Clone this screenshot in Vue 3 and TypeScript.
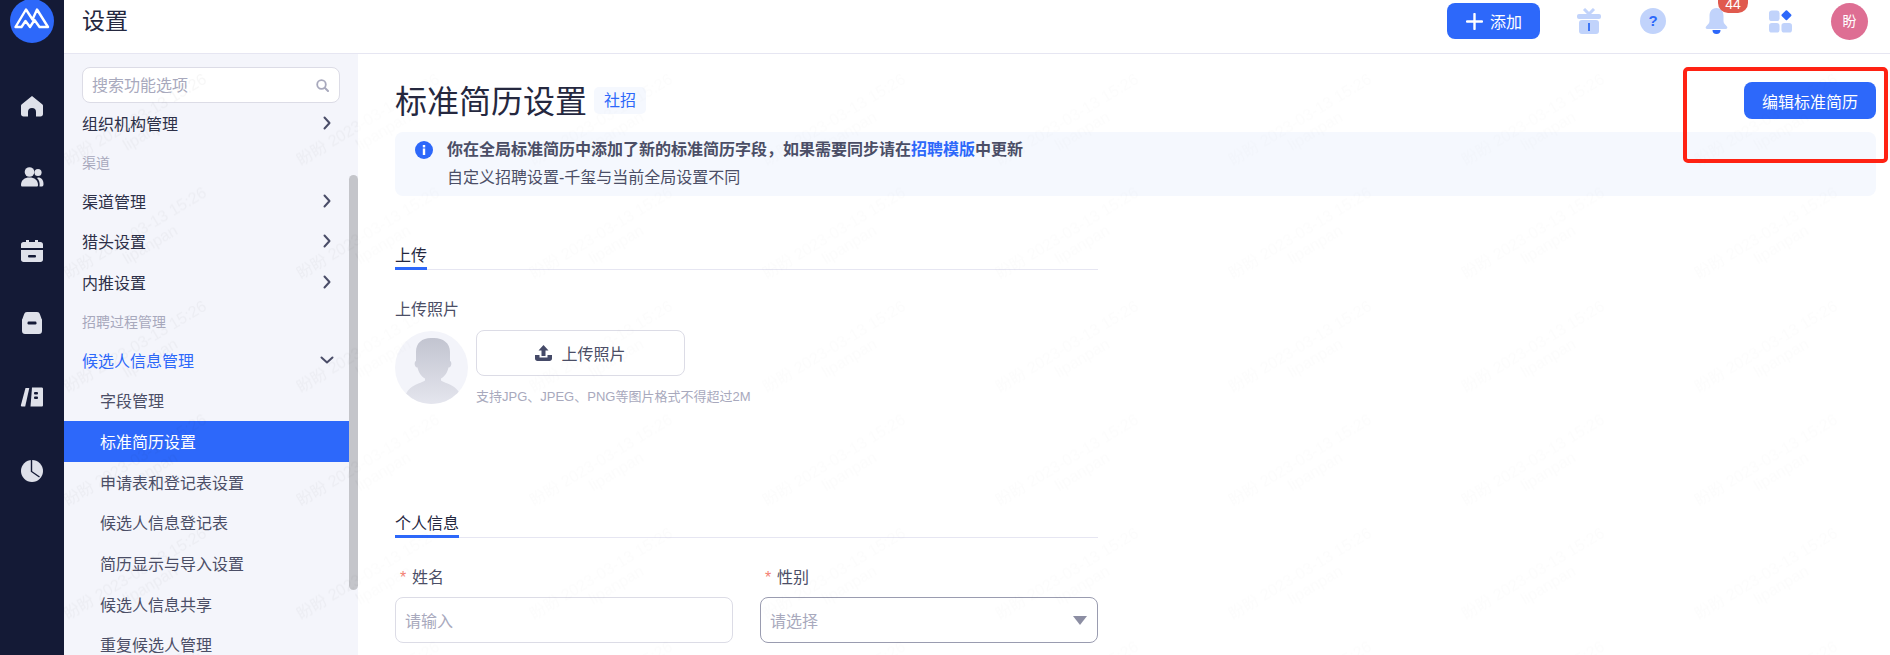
<script setup lang="ts">
// Settings page: standard resume configuration
interface MenuEntry {
  label: string;
  kind: 'group' | 'section' | 'item';
  open?: boolean;
  active?: boolean;
}

const menu: MenuEntry[] = [
  { label: '组织机构管理', kind: 'group' },
  { label: '渠道', kind: 'section' },
  { label: '渠道管理', kind: 'group' },
  { label: '猎头设置', kind: 'group' },
  { label: '内推设置', kind: 'group' },
  { label: '招聘过程管理', kind: 'section' },
  { label: '候选人信息管理', kind: 'group', open: true },
  { label: '字段管理', kind: 'item' },
  { label: '标准简历设置', kind: 'item', active: true },
  { label: '申请表和登记表设置', kind: 'item' },
  { label: '候选人信息登记表', kind: 'item' },
  { label: '简历显示与导入设置', kind: 'item' },
  { label: '候选人信息共享', kind: 'item' },
  { label: '重复候选人管理', kind: 'item' },
];
</script>

<template>
  <div class="page">
    <nav class="rail">
      <svg class="logo" width="44" height="44" viewBox="0 0 44 44">
        <circle cx="22" cy="22" r="22" fill="#2d68fa" />
        <path
          d="M5.500 28 16 10.500l6.500 10L27 10.500 38 28h-8.500l-5-7-4.500 7-4.500-6-4 6z"
          fill="none"
          stroke="#fff"
          stroke-width="2.400"
          stroke-linejoin="round"
        />
      </svg>

      <svg class="rail-icon" style="margin-top: 51px" width="24" height="24" viewBox="0 0 24 24">
        <path
          d="M12 2 22.500 10.500c.5.400.5 1 .5 1.500v8c0 1.500-1 2.500-2.500 2.500H16v-4.500a4 4 0 0 0-8 0V22.500H3.500C2 22.500 1 21.500 1 20v-8c0-.5 0-1.100.5-1.500z"
          fill="#dfe1ea"
        />
      </svg>
      <svg class="rail-icon" style="margin-top: 47px" width="24" height="24" viewBox="0 0 24 24">
        <circle cx="9.500" cy="7" r="4.800" fill="#dfe1ea" />
        <circle cx="18" cy="7.500" r="3.600" fill="#dfe1ea" />
        <path d="M1 20c0-5 3.500-7.500 8.500-7.500S18 15 18 20c0 1-.5 1.500-1.500 1.500h-14C1.500 21.500 1 21 1 20z" fill="#dfe1ea" />
        <path d="M18 12.500c3.500 0 5.500 2.500 5.500 6.500 0 1.500-.5 2.500-1.500 2.500h-2.500c.5-3.500-.2-6.500-2.500-8.500z" fill="#dfe1ea" />
      </svg>
      <svg class="rail-icon" style="margin-top: 50px" width="24" height="24" viewBox="0 0 24 24">
        <path d="M1 9V5.500C1 4 2 3 3.500 3H6V1h3v2h6V1h3v2h2.500C22 3 23 4 23 5.500V9z" fill="#dfe1ea" />
        <path d="M1 11h22v9.500c0 1.500-1 2.500-2.500 2.500h-17C2 23 1 22 1 20.500z" fill="#dfe1ea" />
        <rect x="8" y="16" width="8" height="2.400" rx="1" fill="#141a36" />
      </svg>
      <svg class="rail-icon" style="margin-top: 48px" width="24" height="24" viewBox="0 0 24 24">
        <path d="M7 1h10c1.500 0 2.500.8 3 2.500L22 9H2l2-5.500C4.500 1.800 5.500 1 7 1z" fill="#dfe1ea" />
        <path d="M2 8.500h20V20c0 1.800-1.200 3-3 3H5c-1.800 0-3-1.200-3-3z" fill="#dfe1ea" />
        <rect x="7.500" y="10.500" width="9" height="3" rx="1.200" fill="#141a36" />
      </svg>
      <svg class="rail-icon" style="margin-top: 50px" width="24" height="24" viewBox="0 0 24 24">
        <path d="M5.500 3h3.800L5.200 21.500H1.500L.8 20.500z" fill="#dfe1ea" />
        <path d="M12 2.500h9.500c1 0 1.500.5 1.500 1.500v16c0 1-.5 1.500-1.500 1.500H10.500z" fill="#dfe1ea" />
        <rect x="14" y="7" width="4" height="2.600" rx="1" fill="#141a36" />
        <rect x="14" y="11.500" width="4" height="2.600" rx="1" fill="#141a36" />
      </svg>
      <svg class="rail-icon" style="margin-top: 50px" width="24" height="24" viewBox="0 0 24 24">
        <circle cx="12" cy="12" r="11" fill="#dfe1ea" />
        <path d="M11.500 1v11.500l8 5.500" fill="none" stroke="#141a36" stroke-width="1.400" />
      </svg>
    </nav>

    <div class="body">
      <header class="topbar">
        <h1 class="crumb">设置</h1>
        <div class="tools">
          <button class="add-btn">
            <svg width="17" height="17" viewBox="0 0 17 17">
              <path d="M8.500 1v15M1 8.500h15" stroke="#fff" stroke-width="2.400" stroke-linecap="round" />
            </svg>
            添加
          </button>
          <svg class="tool" width="24" height="26" viewBox="0 0 24 26">
            <path d="M12 6 7 1M12 6l5-5" stroke="#c1d3fb" stroke-width="3" fill="none" />
            <rect y="6" width="24" height="5" rx="2" fill="#c1d3fb" />
            <rect x="2" y="12" width="20" height="14" rx="3" fill="#c1d3fb" />
            <rect x="11" y="15" width="2" height="8" fill="#3b74f6" />
          </svg>
          <span class="help">?</span>
          <span class="bell">
            <svg width="25" height="26" viewBox="0 0 25 26">
              <path
                d="M11.500 0C6.500 0 4.500 4 4.500 8v5c0 2-1.500 3.500-3 5-1.500 1.500-1 3 1 3h18c2 0 2.500-1.500 1-3-1.500-1.500-3-3-3-5V8c0-4-2-8-7-8z"
                fill="#c1d3fb"
              />
              <path d="M7.500 22h8a4 4 0 0 1-8 0z" fill="#2d68fa" />
            </svg>
            <em class="badge">44</em>
          </span>
          <svg class="tool" width="23" height="24" viewBox="0 0 24 24">
            <rect x="0" y="1" width="11" height="11" rx="3" fill="#c1d3fb" />
            <rect x="0" y="14" width="11" height="10" rx="3" fill="#c1d3fb" />
            <rect x="13" y="14" width="11" height="10" rx="3" fill="#c1d3fb" />
            <rect x="14.200" y="2" width="8" height="8" rx="1" fill="#2d68fa" transform="rotate(45 18.200 6)" />
          </svg>
          <span class="user">盼</span>
        </div>
      </header>

      <div class="columns">
        <aside class="side">
          <div class="side-col">
            <label class="search">
              <input placeholder="搜索功能选项" />
              <svg width="13" height="13" viewBox="0 0 13 13">
                <circle cx="5.500" cy="5.500" r="4.300" fill="none" stroke="#a8a9bd" stroke-width="1.800" />
                <path d="m9 9 3 3" stroke="#a8a9bd" stroke-width="2" stroke-linecap="round" />
              </svg>
            </label>
            <ul class="menu">
              <li
                v-for="entry in menu"
                :key="entry.label"
                :class="[entry.kind, { open: entry.open, active: entry.active }]"
              >
                <span>{{ entry.label }}</span>
                <svg v-if="entry.kind === 'group' && !entry.open" width="8" height="14" viewBox="0 0 8 14">
                  <path d="m1.500 1.500 5 5.500-5 5.500" fill="none" stroke="#4a4d68" stroke-width="2" stroke-linecap="round" stroke-linejoin="round" />
                </svg>
                <svg v-else-if="entry.open" width="14" height="8" viewBox="0 0 14 8">
                  <path d="m1.500 1.500 5.500 5 5.500-5" fill="none" stroke="#4a4d68" stroke-width="2" stroke-linecap="round" stroke-linejoin="round" />
                </svg>
              </li>
            </ul>
          </div>
          <div class="track"><div class="thumb"></div></div>
        </aside>

        <main class="main">
          <div class="title-row">
            <div class="title">
              <h2>标准简历设置</h2>
              <span class="tag">社招</span>
            </div>
            <button class="edit-btn">编辑标准简历</button>
          </div>

          <div class="notice">
            <svg width="18" height="18" viewBox="0 0 18 18">
              <circle cx="9" cy="9" r="9" fill="#2d68fa" />
              <rect x="7.800" y="7.500" width="2.400" height="6.500" fill="#fff" />
              <rect x="7.800" y="4" width="2.400" height="2.400" fill="#fff" />
            </svg>
            <div>
              <p class="strong">你在全局标准简历中添加了新的标准简历字段，如果需要同步请在<a>招聘模版</a>中更新</p>
              <p>自定义招聘设置-千玺与当前全局设置不同</p>
            </div>
          </div>

          <section class="form-part upload-part">
            <div class="heading"><span>上传</span></div>
            <div class="field-label">上传照片</div>
            <div class="upload-row">
              <svg class="portrait" width="73" height="73" viewBox="0 0 73 73">
                <defs>
                  <linearGradient id="fig" x1="0" y1="0" x2="0" y2="1">
                    <stop offset="0" stop-color="#c2c4d0" />
                    <stop offset="1" stop-color="#e6e7ef" />
                  </linearGradient>
                  <clipPath id="disc"><circle cx="36.500" cy="36.500" r="36.500" /></clipPath>
                </defs>
                <circle cx="36.500" cy="36.500" r="36.500" fill="#f3f4fa" />
                <path
                  clip-path="url(#disc)"
                  d="M36 7c-9 0-15 5-15 14v9c-2 .5-2 6 1.500 6.500 1 5 4 9 7.500 11v2c-3 3-20 4-20 20v6h56v-6c0-16-17-17-20-20v-2c3.500-2 6.500-6 7.500-11 3.500-.5 3.500-6 1.500-6.500v-9c0-9-7-14-16-14z"
                  fill="url(#fig)"
                />
              </svg>
              <div>
                <button class="upload-btn">
                  <svg width="17" height="16" viewBox="0 0 17 16">
                    <path d="M8.500 0 13.500 5.500H10.500V11h-4V5.500H3.500z" fill="#454a68" />
                    <path d="M0 10h4.500v2.500h8V10H17v3.500c0 1.500-1 2.500-2.500 2.500h-12C1 16 0 15 0 13.500z" fill="#454a68" />
                  </svg>
                  上传照片
                </button>
                <p class="hint">支持JPG、JPEG、PNG等图片格式不得超过2M</p>
              </div>
            </div>
          </section>

          <section class="form-part person-part">
            <div class="heading"><span>个人信息</span></div>
            <div class="form-grid">
              <div>
                <div class="field-label"><i>*</i>姓名</div>
                <div class="control">请输入</div>
              </div>
              <div>
                <div class="field-label"><i>*</i>性别</div>
                <div class="control focus">
                  请选择
                  <svg width="14" height="9" viewBox="0 0 14 9"><path d="M0 0h14L7 9z" fill="#8c8ea3" /></svg>
                </div>
              </div>
            </div>
          </section>
        </main>
      </div>
    </div>

    <!-- annotation frame drawn on the screenshot -->
    <div class="red-frame"></div>

    <svg class="watermark" width="1890" height="655">
      <defs>
        <pattern id="wm" patternUnits="userSpaceOnUse" x="63" y="66" width="233" height="113.500">
          <g fill="#000" fill-opacity="0.03" font-size="16" font-family="'Liberation Sans','Noto Sans CJK SC',sans-serif">
            <text transform="translate(5 100) rotate(-31)">盼盼 2023-03-13 15:26</text>
            <text transform="translate(64 85) rotate(-31)">lipanpan</text>
          </g>
        </pattern>
      </defs>
      <rect x="64" y="54" width="294" height="601" fill="url(#wm)" />
      <rect x="358" y="54" width="1532" height="601" fill="url(#wm)" opacity="0.35" />
    </svg>
  </div>
</template>

<style>
html,
body {
  margin: 0;
  background: #fff;
}
</style>

<style scoped>
.page {
  position: relative;
  display: flex;
  width: 1890px;
  height: 655px;
  overflow: hidden;
  font-family: 'Liberation Sans', 'Noto Sans CJK SC', sans-serif;
  font-size: 16px;
  color: #2d3048;
  background: #fff;
}
h1,
h2,
p,
ul {
  margin: 0;
  padding: 0;
  font-weight: 400;
}
button {
  font: inherit;
  border: 0;
  cursor: pointer;
}

/* left rail */
.rail {
  flex: 0 0 64px;
  display: flex;
  flex-direction: column;
  align-items: center;
  background: #141a36;
}
.logo {
  flex: none;
  margin-top: -1px;
}
.rail-icon {
  flex: none;
  display: block;
}

.body {
  flex: 1;
  min-width: 0;
  display: flex;
  flex-direction: column;
}

/* top bar */
.topbar {
  flex: 0 0 54px;
  box-sizing: border-box;
  display: flex;
  justify-content: space-between;
  padding: 3px 22px 0 18px;
  border-bottom: 1px solid #e6e6f2;
}
.crumb {
  font-size: 23px;
  line-height: 36px;
  color: #25283f;
}
.tools {
  display: flex;
  align-items: center;
  gap: 39px;
  height: 36px;
}
.add-btn {
  display: flex;
  align-items: center;
  gap: 7px;
  box-sizing: border-box;
  width: 93px;
  height: 36px;
  margin-right: -2px;
  padding-left: 19px;
  border-radius: 8px;
  background: #2d68fa;
  color: #fff;
}
.tool {
  display: block;
  flex: none;
}
.help {
  flex: none;
  width: 26px;
  height: 26px;
  border-radius: 50%;
  background: #c1d3fb;
  color: #2d68fa;
  font-size: 15px;
  font-weight: 700;
  line-height: 26px;
  text-align: center;
}
.bell {
  position: relative;
  flex: none;
  width: 25px;
  height: 26px;
}
.badge {
  position: absolute;
  left: 13px;
  top: -14px;
  width: 30px;
  height: 19px;
  border-radius: 0 0 10px 10px;
  background: #e05a4e;
  color: #fff;
  font-size: 14px;
  font-style: normal;
  line-height: 21px;
  text-align: center;
}
.user {
  flex: none;
  width: 37px;
  height: 37px;
  border-radius: 50%;
  background: #de6e93;
  color: #fff;
  font-size: 14px;
  line-height: 37px;
  text-align: center;
}

.columns {
  flex: 1;
  min-height: 0;
  display: flex;
}

/* settings menu */
.side {
  flex: 0 0 294px;
  display: flex;
  background: #f4f5fb;
}
.side-col {
  flex: 1;
  min-width: 0;
}
.search {
  display: flex;
  align-items: center;
  box-sizing: border-box;
  width: 258px;
  height: 36px;
  margin: 13px 0 0 18px;
  padding: 0 10px 0 9px;
  border: 1px solid #dcdce6;
  border-radius: 8px;
  background: #fff;
}
.search input {
  flex: 1;
  min-width: 0;
  padding: 2px 0 0;
  border: 0;
  outline: 0;
  background: none;
  font: inherit;
}
.search input::placeholder {
  color: #a8a9bd;
}
.menu {
  list-style: none;
}
.menu li {
  display: flex;
  align-items: center;
  justify-content: space-between;
  box-sizing: border-box;
  height: 40.7px;
  padding: 0 18px 1px;
}
.menu .section {
  height: 37px;
  font-size: 14px;
  color: #a8a9bd;
}
.menu .open {
  color: #2d68fa;
}
.menu .open svg {
  margin-right: -3px;
}
.menu .item {
  padding-left: 36px;
  color: #4b4e66;
}
.menu .active {
  background: #2d68fa;
  color: #fff;
}
.track {
  flex: 0 0 9px;
}
.thumb {
  width: 9px;
  height: 415px;
  margin-top: 121px;
  border-radius: 5px;
  background: #c4c5ca;
}

/* content */
.main {
  flex: 1;
  min-width: 0;
  padding: 28px 14px 0 37px;
}
.title-row {
  display: flex;
  justify-content: space-between;
  align-items: flex-start;
  height: 40px;
  margin-bottom: 10px;
}
.title {
  display: flex;
  align-items: center;
  gap: 7px;
}
.title h2 {
  font-size: 32px;
  line-height: 40px;
  color: #25283f;
}
.tag {
  box-sizing: border-box;
  width: 52px;
  height: 27px;
  margin-top: -4px;
  border-radius: 5px;
  background: #f5f8fe;
  color: #2d68fa;
  line-height: 27px;
  text-align: center;
}
.edit-btn {
  width: 132px;
  height: 37px;
  border-radius: 8px;
  background: #2d68fa;
  color: #fff;
}
.notice {
  display: flex;
  gap: 14px;
  box-sizing: border-box;
  height: 64px;
  padding: 4px 20px;
  border-radius: 8px;
  background: #f5f8fe;
  color: #4b4e66;
  line-height: 28px;
}
.notice > svg {
  flex: none;
  margin-top: 5px;
}
.notice .strong {
  font-weight: 700;
}
.notice a {
  color: #2d68fa;
}

.form-part {
  width: 703px;
}
.upload-part {
  margin-top: 48px;
}
.person-part {
  margin-top: 105px;
}
.heading {
  border-bottom: 1px solid #e6e6f2;
  line-height: 23px;
  color: #25283f;
}
.heading span {
  display: inline-block;
  margin-bottom: -1px;
  border-bottom: 3px solid #2d68fa;
  vertical-align: bottom;
}
.field-label {
  height: 24px;
  margin-top: 28px;
  line-height: 24px;
  color: #4b4e66;
}
.field-label i {
  display: inline-block;
  width: 17px;
  padding-left: 5px;
  box-sizing: border-box;
  color: #f47f73;
  font-style: normal;
}
.upload-row {
  display: flex;
  gap: 8px;
  margin-top: 8px;
}
.portrait {
  flex: none;
  margin-top: 1px;
}
.upload-btn {
  display: flex;
  align-items: center;
  justify-content: center;
  gap: 9px;
  box-sizing: border-box;
  width: 209px;
  height: 46px;
  border: 1px solid #dcdce6;
  border-radius: 8px;
  background: #fff;
  color: #4b4e66;
}
.hint {
  margin-top: 11px;
  font-size: 13px;
  line-height: 20px;
  color: #a8a9bd;
}
.form-grid {
  display: grid;
  grid-template-columns: 338px 338px;
  gap: 27px;
}
.control {
  display: flex;
  align-items: center;
  justify-content: space-between;
  box-sizing: border-box;
  height: 46px;
  margin-top: 7px;
  padding: 0 10px 0 9px;
  border: 1px solid #dcdce6;
  border-radius: 8px;
  color: #a8a9bd;
}
.control.focus {
  border-color: #9a9cb0;
}

/* overlays */
.red-frame {
  position: absolute;
  left: 1683px;
  top: 67px;
  box-sizing: border-box;
  width: 205px;
  height: 96px;
  border: 4px solid #ff2213;
  border-radius: 5px;
  pointer-events: none;
}
.watermark {
  position: absolute;
  left: 0;
  top: 0;
  pointer-events: none;
}
</style>
